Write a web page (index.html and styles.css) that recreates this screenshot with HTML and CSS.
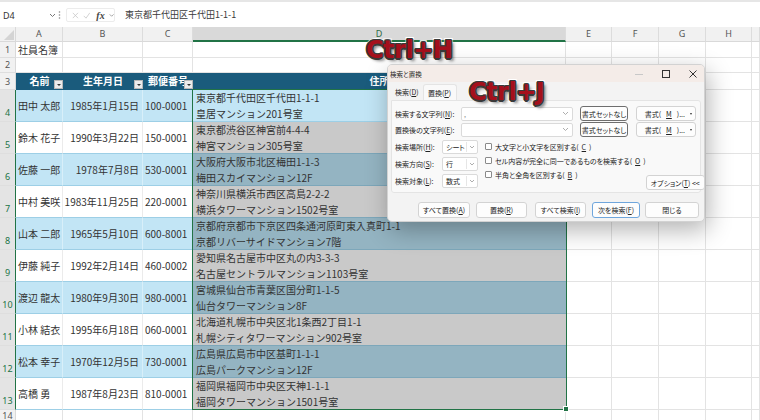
FILE: index.html
```html
<!DOCTYPE html>
<html lang="ja">
<head>
<meta charset="utf-8">
<title>検索と置換</title>
<link rel="stylesheet" href="styles.css">
</head>
<body>
<div class="app">
  <div class="fbar">
    <div class="namebox"><span>D4</span><svg class="chev" width="7" height="5" viewBox="0 0 7 5"><path d="M1 1l2.5 2.5L6 1" fill="none" stroke="#777" stroke-width="1"/></svg></div>
    <svg class="dots" width="3" height="10" viewBox="0 0 3 10"><circle cx="1.5" cy="2" r="0.8" fill="#888"/><circle cx="1.5" cy="5" r="0.8" fill="#888"/><circle cx="1.5" cy="8" r="0.8" fill="#888"/></svg>
    <div class="fxbox">
      <svg width="9" height="9" viewBox="0 0 9 9"><path d="M1 1l7 7M8 1L1 8" stroke="#c4c4c4" stroke-width="1"/></svg>
      <svg width="10" height="9" viewBox="0 0 10 9"><path d="M1 5l3 3 5-7" fill="none" stroke="#c4c4c4" stroke-width="1"/></svg>
      <i class="fx">fx</i>
      <svg class="chev" width="7" height="5" viewBox="0 0 7 5"><path d="M1 1l2.5 2.5L6 1" fill="none" stroke="#888" stroke-width="1"/></svg>
    </div>
    <div class="finput">東京都千代田区千代田1-1-1</div>
  </div>

  <div class="sheet">
    <!-- column headers -->
    <div class="corner"></div><div class="ch">A</div><div class="ch">B</div><div class="ch">C</div><div class="ch hsel">D</div><div class="ch">E</div><div class="ch">F</div><div class="ch">G</div><div class="ch">H</div><div class="ch"></div>
    <!-- row 1 -->
    <div class="rh">1</div><div class="c title">社員名簿</div><div class="c"></div><div class="c"></div><div class="c"></div><div class="c"></div><div class="c"></div><div class="c"></div><div class="c"></div><div class="c"></div>
    <!-- row 2 -->
    <div class="rh">2</div><div class="c"></div><div class="c"></div><div class="c"></div><div class="c"></div><div class="c"></div><div class="c"></div><div class="c"></div><div class="c"></div><div class="c"></div>
    <!-- row 3 -->
    <div class="rh">3</div><div class="th">名前<span class="fbtn"></span></div><div class="th">生年月日<span class="fbtn"></span></div><div class="th">郵便番号<span class="fbtn"></span></div><div class="th">住所</div><div class="c"></div><div class="c"></div><div class="c"></div><div class="c"></div><div class="c"></div>
    <!-- row 4 -->
    <div class="rh hsel">4</div><div class="tb name">田中 太郎</div><div class="tb date">1985年1月15日</div><div class="tb zip">100-0001</div><div class="addr da">東京都千代田区千代田1-1-1<br>皇居マンション201号室</div><div class="c"></div><div class="c"></div><div class="c"></div><div class="c"></div><div class="c"></div>
    <!-- row 5 -->
    <div class="rh hsel">5</div><div class="tw name">鈴木 花子</div><div class="tw date">1990年3月22日</div><div class="tw zip">150-0001</div><div class="addr dg">東京都渋谷区神宮前4-4-4<br>神宮マンション305号室</div><div class="c"></div><div class="c"></div><div class="c"></div><div class="c"></div><div class="c"></div>
    <!-- row 6 -->
    <div class="rh hsel">6</div><div class="tb name">佐藤 一郎</div><div class="tb date">1978年7月8日</div><div class="tb zip">530-0001</div><div class="addr ds">大阪府大阪市北区梅田1-1-3<br>梅田スカイマンション12F</div><div class="c"></div><div class="c"></div><div class="c"></div><div class="c"></div><div class="c"></div>
    <!-- row 7 -->
    <div class="rh hsel">7</div><div class="tw name">中村 美咲</div><div class="tw date">1983年11月25日</div><div class="tw zip">220-0001</div><div class="addr dg">神奈川県横浜市西区高島2-2-2<br>横浜タワーマンション1502号室</div><div class="c"></div><div class="c"></div><div class="c"></div><div class="c"></div><div class="c"></div>
    <!-- row 8 -->
    <div class="rh hsel">8</div><div class="tb name">山本 二郎</div><div class="tb date">1965年5月10日</div><div class="tb zip">600-8001</div><div class="addr ds">京都府京都市下京区四条通河原町東入真町1-1<br>京都リバーサイドマンション7階</div><div class="c"></div><div class="c"></div><div class="c"></div><div class="c"></div><div class="c"></div>
    <!-- row 9 -->
    <div class="rh hsel">9</div><div class="tw name">伊藤 純子</div><div class="tw date">1992年2月14日</div><div class="tw zip">460-0002</div><div class="addr dg">愛知県名古屋市中区丸の内3-3-3<br>名古屋セントラルマンション1103号室</div><div class="c"></div><div class="c"></div><div class="c"></div><div class="c"></div><div class="c"></div>
    <!-- row 10 -->
    <div class="rh hsel">10</div><div class="tb name">渡辺 龍太</div><div class="tb date">1980年9月30日</div><div class="tb zip">980-0001</div><div class="addr ds">宮城県仙台市青葉区国分町1-1-5<br>仙台タワーマンション8F</div><div class="c"></div><div class="c"></div><div class="c"></div><div class="c"></div><div class="c"></div>
    <!-- row 11 -->
    <div class="rh hsel">11</div><div class="tw name">小林 結衣</div><div class="tw date">1995年6月18日</div><div class="tw zip">060-0001</div><div class="addr dg">北海道札幌市中央区北1条西2丁目1-1<br>札幌シティタワーマンション902号室</div><div class="c"></div><div class="c"></div><div class="c"></div><div class="c"></div><div class="c"></div>
    <!-- row 12 -->
    <div class="rh hsel">12</div><div class="tb name">松本 幸子</div><div class="tb date">1970年12月5日</div><div class="tb zip">730-0001</div><div class="addr ds">広島県広島市中区基町1-1-1<br>広島パークマンション12F</div><div class="c"></div><div class="c"></div><div class="c"></div><div class="c"></div><div class="c"></div>
    <!-- row 13 -->
    <div class="rh hsel">13</div><div class="tw name">高橋 勇</div><div class="tw date">1987年8月23日</div><div class="tw zip">810-0001</div><div class="addr dg">福岡県福岡市中央区天神1-1-1<br>福岡タワーマンション1501号室</div><div class="c"></div><div class="c"></div><div class="c"></div><div class="c"></div><div class="c"></div>
    <!-- row 14 -->
    <div class="rh last">14</div><div class="c"></div><div class="c"></div><div class="c"></div><div class="c"></div><div class="c"></div><div class="c"></div><div class="c"></div><div class="c"></div><div class="c"></div>
  </div>

  <div class="selbox"><span class="handle"></span></div>

  <div class="hint hint-h">Ctrl+H</div>

  <div class="dlg">
    <div class="dlg-title">
      <span>検索と置換</span>
      <div class="winbtns">
        <svg width="10" height="10" viewBox="0 0 10 10"><path d="M1 5.5h8" stroke="#c8c8c8" stroke-width="1"/></svg>
        <svg width="10" height="10" viewBox="0 0 10 10"><rect x="1.5" y="1.5" width="7" height="7" fill="none" stroke="#333" stroke-width="1"/></svg>
        <svg width="10" height="10" viewBox="0 0 10 10"><path d="M1.5 1.5l7 7M8.5 1.5l-7 7" stroke="#333" stroke-width="1"/></svg>
      </div>
    </div>
    <div class="tabs">
      <span class="tab">検索(<u>D</u>)</span>
      <span class="tab on">置換(<u>P</u>)</span>
    </div>
    <div class="panel">
      <div class="frow">
        <span class="lbl">検索する文字列(<u>N</u>):</span>
        <span class="inp"><span class="caret">,</span><svg class="dd" width="7" height="5" viewBox="0 0 7 5"><path d="M1 1l2.5 2.5L6 1" fill="none" stroke="#999" stroke-width="0.8"/></svg></span>
        <span class="btn dark">書式セットなし</span>
        <span class="btn fmt">書式(<u>M</u>)...<i class="tri"></i></span>
      </div>
      <div class="frow">
        <span class="lbl">置換後の文字列(<u>E</u>):</span>
        <span class="inp"><span class="caret"></span><svg class="dd" width="7" height="5" viewBox="0 0 7 5"><path d="M1 1l2.5 2.5L6 1" fill="none" stroke="#999" stroke-width="0.8"/></svg></span>
        <span class="btn dark">書式セットなし</span>
        <span class="btn fmt">書式(<u>M</u>)...<i class="tri"></i></span>
      </div>
      <div class="opts">
        <div class="selcol">
          <div class="srow"><span class="slbl">検索場所(<u>H</u>):</span><span class="dsel"><span>シート</span><svg width="6" height="4" viewBox="0 0 6 4"><path d="M1 1l2 2 2-2" fill="none" stroke="#999" stroke-width="0.8"/></svg></span></div>
          <div class="srow"><span class="slbl">検索方向(<u>S</u>):</span><span class="dsel"><span>行</span><svg width="6" height="4" viewBox="0 0 6 4"><path d="M1 1l2 2 2-2" fill="none" stroke="#999" stroke-width="0.8"/></svg></span></div>
          <div class="srow"><span class="slbl">検索対象(<u>L</u>):</span><span class="dsel"><span>数式</span><svg width="6" height="4" viewBox="0 0 6 4"><path d="M1 1l2 2 2-2" fill="none" stroke="#999" stroke-width="0.8"/></svg></span></div>
        </div>
        <div class="chkcol">
          <div class="chk"><span class="box"></span>大文字と小文字を区別する(<u>C</u>)</div>
          <div class="chk"><span class="box"></span>セル内容が完全に同一であるものを検索する(<u>O</u>)</div>
          <div class="chk"><span class="box"></span>半角と全角を区別する(<u>B</u>)</div>
        </div>
        <span class="btn optbtn">オプション(<u>T</u>) &lt;&lt;</span>
      </div>
    </div>
    <div class="actions">
      <span class="btn a1">すべて置換(<u>A</u>)</span>
      <span class="btn a2">置換(<u>R</u>)</span>
      <span class="btn a3">すべて検索(<u>I</u>)</span>
      <span class="btn a4 focus">次を検索(<u>F</u>)</span>
      <span class="btn a5">閉じる</span>
    </div>
  </div>

  <div class="hint hint-j">Ctrl+J</div>
</div>
</body>
</html>
```

FILE: styles.css
```css
body {
  margin: 0;
  background: #fff;
  font-family: "Noto Sans CJK JP", "Noto Sans", sans-serif;
}

.app {
  position: relative;
  width: 760px;
  height: 420px;
  overflow: hidden;
  background: #fff;
}

/* ---------- formula bar ---------- */
.fbar {
  height: 27px;
  box-sizing: border-box;
  border-top: 2px solid #e6e6e6;
  padding-top: 6px;
  display: flex;
  align-items: flex-start;
  background: #fff;
  font-size: 9px;
  color: #333;
}
.namebox {
  width: 56px;
  height: 14px;
  box-sizing: border-box;
  display: flex;
  align-items: center;
  padding-left: 3px;
}
.namebox span {
  font-family: "Noto Sans", sans-serif;
  width: 46px;
}
.dots {
  margin: 2px 5px 0 2px;
}
.fxbox {
  width: 49px;
  height: 14px;
  box-sizing: border-box;
  border: 1px solid #ececec;
  border-radius: 2px;
  display: flex;
  align-items: center;
  gap: 4px;
  padding-left: 5px;
}
.fx {
  font-family: "Liberation Serif", serif;
  font-size: 10px;
  font-weight: bold;
  color: #444;
  margin-left: 2px;
}
.finput {
  flex: 1;
  height: 14px;
  margin-left: 3px;
  padding-left: 7px;
  line-height: 14px;
  font-size: 9px;
  color: #3a3a3a;
}

/* ---------- sheet grid ---------- */
.sheet {
  display: grid;
  grid-template-columns: 16px 47px 80px 50px 373px 46px 47px 47px 46px 1fr;
  grid-template-rows: 15px 16px 15px 17px repeat(10, 32px) 12px;
  font-size: 10px;
  color: #333;
}
.sheet > div {
  box-sizing: border-box;
  border-right: 1px solid #e3e3e3;
  border-bottom: 1px solid #e3e3e3;
  white-space: nowrap;
  overflow: hidden;
}

.corner {
  background: #f1f1f1;
  position: relative;
  border-right-color: #d9d9d9 !important;
  border-bottom-color: #d9d9d9 !important;
}
.corner::after {
  content: "";
  position: absolute;
  right: 1px;
  bottom: 1px;
  border-left: 10px solid transparent;
  border-bottom: 10px solid #d4d4d4;
}
.ch {
  background: #f1f1f1;
  color: #555;
  font-family: "Noto Sans", sans-serif;
  font-size: 9px;
  line-height: 14px;
  text-align: center;
  border-right-color: #dcdcdc !important;
  border-bottom-color: #d9d9d9 !important;
}
.ch.hsel {
  background: #d9d9d9;
  color: #2d6a45;
  border-bottom: 2px solid #217346 !important;
  line-height: 13px;
}
.rh {
  background: #f1f1f1;
  color: #555;
  font-family: "Noto Sans", sans-serif;
  font-size: 9px;
  display: flex;
  align-items: flex-end;
  justify-content: center;
  padding-bottom: 1px;
  border-right-color: #d9d9d9 !important;
  border-bottom-color: #dedede !important;
}
.rh.hsel {
  background: #e4e4e4;
  color: #217346;
  border-right: 1px solid #217346 !important;
  padding-bottom: 2px;
}
.rh.last {
  align-items: flex-start;
  padding: 0;
  line-height: 12px;
}

.title {
  display: flex;
  align-items: center;
  padding-left: 2px;
  overflow: visible !important;
}

/* table header */
.th {
  background: #1a5b7c;
  color: #fff;
  font-weight: bold;
  text-align: center;
  line-height: 16px;
  position: relative;
  border-right: none !important;
  border-bottom: 1px solid #1a5b7c !important;
}
.fbtn {
  position: absolute;
  right: 0;
  bottom: 0;
  width: 9px;
  height: 9px;
  box-sizing: border-box;
  background: #ececec;
  border: 1px solid #b8b8b8;
}
.fbtn::after {
  content: "";
  position: absolute;
  left: 2px;
  top: 3px;
  border-left: 2px solid transparent;
  border-right: 2px solid transparent;
  border-top: 2px solid #333;
}

/* table body */
.tb, .tw {
  display: flex;
  align-items: center;
  border-bottom-color: #9dcfe6 !important;
}
.tb {
  background: #c2e5f5;
  border-right-color: #d8eff9 !important;
}
.tw {
  background: #fff;
  border-right-color: #ebebeb !important;
}
.name { padding-left: 2px; }
.date { justify-content: flex-end; padding-right: 3px; }
.zip { padding-left: 2px; }

.addr {
  line-height: 16px;
  padding-left: 3px;
  color: #333;
  border-right: none !important;
  border-bottom-color: #7da7ba !important;
}
.da { background: #c2e5f5; border-bottom-color: #9dcfe6 !important; }
.ds { background: #94b4c2; }
.dg { background: #c9c9c9; }

/* selection */
.selbox {
  position: absolute;
  left: 192px;
  top: 89px;
  width: 375px;
  height: 321px;
  box-sizing: border-box;
  border: 1px solid #217346;
  pointer-events: none;
}
.handle {
  position: absolute;
  right: -3px;
  bottom: -3px;
  width: 4px;
  height: 4px;
  background: #217346;
  border: 1px solid #fff;
}

/* ---------- shortcut hints ---------- */
.hint {
  position: absolute;
  font-family: "DejaVu Sans", sans-serif;
  font-weight: bold;
  font-size: 24px;
  line-height: 24px;
  letter-spacing: -0.5px;
  color: #a5101c;
  -webkit-text-stroke: 4px #fff;
  paint-order: stroke fill;
  text-shadow:
    1.5px 0 0 #3a3a3a, -1.5px 0 0 #3a3a3a, 0 1.5px 0 #3a3a3a, 0 -1.5px 0 #3a3a3a,
    1px 1px 0 #3a3a3a, -1px -1px 0 #3a3a3a, 1px -1px 0 #3a3a3a, -1px 1px 0 #3a3a3a,
    3px 3px 3px rgba(0,0,0,0.45);
  white-space: nowrap;
}
.hint-h { left: 366px; top: 38px; }
.hint-j { left: 469px; top: 80px; }

/* ---------- dialog ---------- */
.dlg {
  position: absolute;
  left: 387px;
  top: 64px;
  width: 318px;
  height: 158px;
  box-sizing: border-box;
  background: #f3f3f3;
  border: 1px solid #d2d2d2;
  border-radius: 5px;
  box-shadow: 3px 8px 24px rgba(0,0,0,0.30);
  overflow: hidden;
  font-size: 7px;
  color: #222;
  font-feature-settings: "palt";
  white-space: nowrap;
}
.dlg u { text-decoration: underline; }
.dlg-title {
  height: 17px;
  background: #f4ece8;
  display: flex;
  align-items: center;
  padding-left: 2px;
  font-size: 6.5px;
}
.winbtns {
  margin-left: auto;
  display: flex;
  gap: 17px;
  padding-right: 6px;
  align-items: center;
}
.tabs {
  height: 18px;
  box-sizing: border-box;
  padding: 2px 0 0 4px;
  display: flex;
  align-items: stretch;
}
.tab {
  padding: 0 3px;
  display: flex;
  align-items: center;
}
.tab.on {
  background: #f9f9f9;
  border: 1px solid #e4e4e4;
  border-bottom: none;
  border-radius: 3px 3px 0 0;
  width: 34px;
  box-sizing: border-box;
  justify-content: center;
  margin-left: 1px;
}
.panel {
  height: 93px;
  box-sizing: border-box;
  margin: 0 3px;
  background: #f9f9f9;
  border: 1px solid #e4e4e4;
  border-radius: 0 3px 3px 3px;
  padding: 5px 4px 0 3px;
}
.frow {
  display: flex;
  align-items: center;
  height: 15px;
  margin-bottom: 1px;
}
.lbl { width: 66px; }
.inp {
  width: 112px;
  height: 14px;
  box-sizing: border-box;
  background: #fff;
  border: 1px solid #dadada;
  border-radius: 2px;
  display: flex;
  align-items: center;
  padding: 0 3px 0 2px;
}
.caret { color: #888; flex: 1; line-height: 10px; }
.btn {
  height: 15px;
  box-sizing: border-box;
  background: #fdfdfd;
  border: 1px solid #d3d3d3;
  border-radius: 3px;
  display: flex;
  align-items: center;
  justify-content: center;
  white-space: nowrap;
}
.btn.dark {
  width: 48px;
  margin-left: 7px;
  border-color: #6e6e6e;
}
.btn.fmt {
  width: 60px;
  margin-left: 8px;
  justify-content: flex-end;
  padding-right: 3px;
  gap: 5px;
}
.tri {
  display: inline-block;
  border-left: 1.5px solid transparent;
  border-right: 1.5px solid transparent;
  border-top: 2px solid #333;
}
.opts {
  display: flex;
  margin-top: 3px;
  height: 49px;
}
.selcol {
  width: 83px;
  flex: none;
  display: flex;
  flex-direction: column;
  gap: 3px;
}
.srow {
  height: 14px;
  display: flex;
  align-items: center;
}
.slbl { width: 47px; }
.dsel {
  width: 36px;
  height: 14px;
  box-sizing: border-box;
  background: #fff;
  border: 1px solid #dadada;
  border-radius: 2px;
  display: flex;
  align-items: center;
  padding-left: 3px;
}
.dsel span { flex: 1; }
.dsel svg {
  padding: 0 2px;
  border-left: 1px solid #e6e6e6;
  height: 10px;
}
.chkcol {
  margin-left: 7px;
  display: flex;
  flex-direction: column;
  gap: 1px;
}
.chk {
  height: 13px;
  display: flex;
  align-items: center;
  gap: 3px;
}
.box {
  width: 7px;
  height: 7px;
  box-sizing: border-box;
  border: 1px solid #8a8a8a;
  border-radius: 1px;
  background: #fff;
}
.optbtn {
  margin-left: auto;
  width: 59px;
  flex: none;
  align-self: flex-end;
  margin-bottom: -1px;
}
.actions {
  display: flex;
  padding: 9px 0 0 30px;
  gap: 6px;
}
.actions .btn { height: 16px; }
.a1 { width: 52px; }
.a2 { width: 51px; }
.a3 { width: 51px; margin-left: 2px; }
.a4 { width: 48px; }
.a5 { width: 54px; margin-left: -1px; }
.focus { border-color: #6fa6dc; }
```
